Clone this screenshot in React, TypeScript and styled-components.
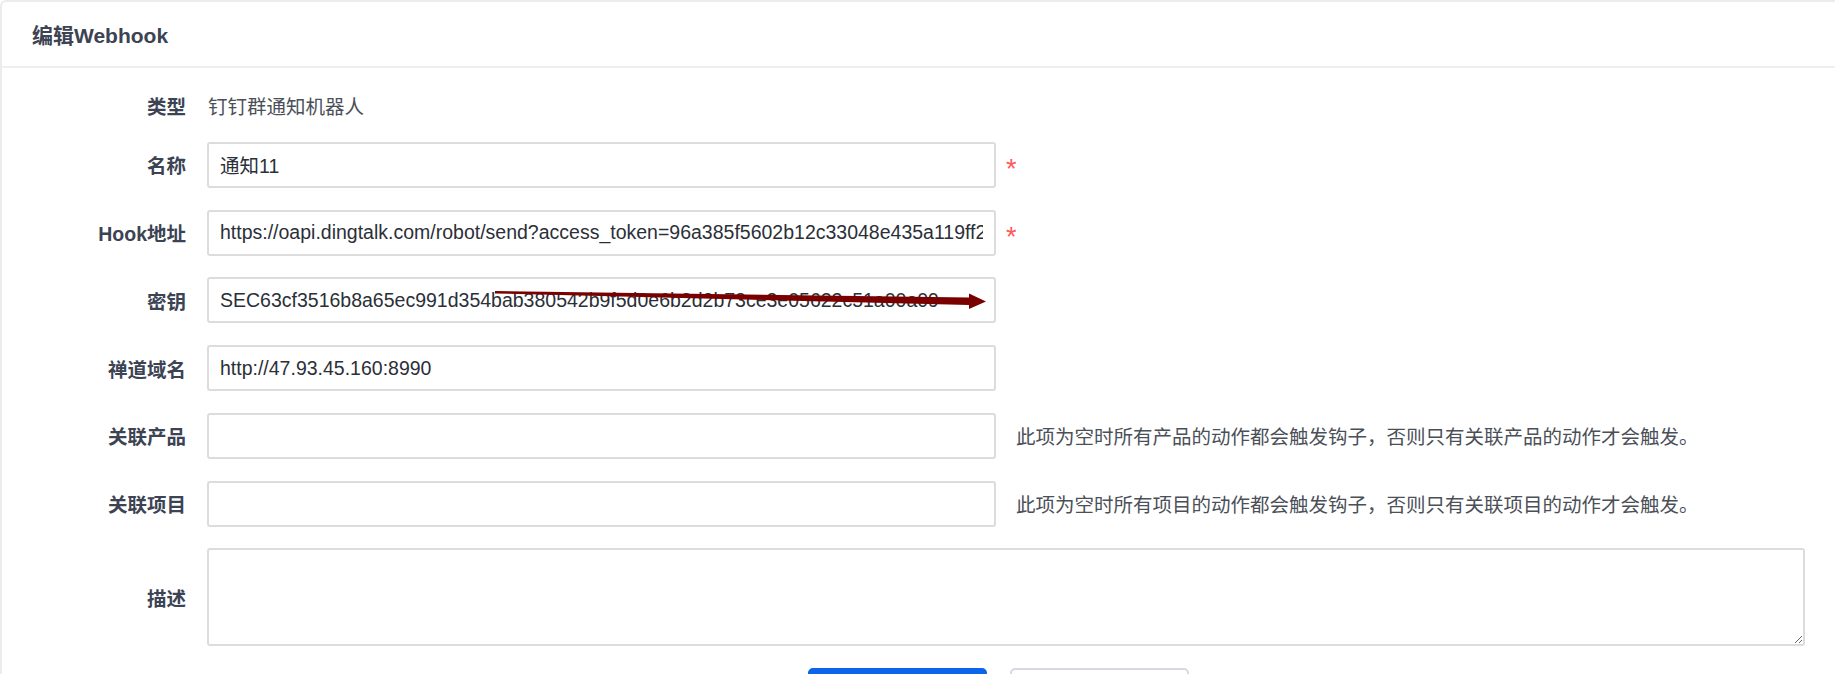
import styled, { createGlobalStyle } from 'styled-components';

const GlobalStyle = createGlobalStyle`
  html, body {
    margin: 0;
    padding: 0;
    background: #ffffff;
    overflow: hidden;
  }
  body {
    font-family: "Liberation Sans", "Noto Sans CJK SC", sans-serif;
    font-size: 19.5px;
    color: #3c4353;
  }
`;

const Panel = styled.div`
  width: 1900px;
  height: 720px;
  background: #fff;
  border: 2px solid #ececec;
  border-right: none;
  border-top-left-radius: 6px;
  box-sizing: border-box;
`;

const PanelHeader = styled.div`
  height: 64px;
  display: flex;
  align-items: center;
  padding-left: 30px;
  border-bottom: 2px solid #efefef;
`;

const Title = styled.h2`
  margin: 0;
  font-size: 21px;
  font-weight: bold;
  color: #3c4353;
`;

const Form = styled.div`
  width: 1803px;
  display: flex;
  flex-direction: column;
  gap: 21.75px;
  padding-top: 23px;
`;

const Row = styled.div<{ $tall?: boolean }>`
  display: flex;
  align-items: center;
  min-height: ${(p) => (p.$tall ? '98px' : '28px')};
`;

const Label = styled.div`
  width: 184px;
  flex: none;
  margin-right: 21px;
  text-align: right;
  font-weight: bold;
  color: #3c4353;
`;

const Value = styled.div`
  color: #4b4f58;
  padding-left: 1px;
`;

const Field = styled.div`
  position: relative;
  width: 789px;
  flex: none;
`;

const Input = styled.input`
  width: 100%;
  height: 46px;
  box-sizing: border-box;
  border: 2px solid #dcdcdc;
  border-radius: 3px;
  padding: 0 11px;
  font-family: "Liberation Sans", "Noto Sans CJK SC", sans-serif;
  font-size: 19.5px;
  color: #2b2f38;
  background: #fff;
  outline: none;
`;

const TextArea = styled.textarea`
  flex: 1;
  height: 98px;
  box-sizing: border-box;
  border: 2px solid #dcdcdc;
  border-radius: 3px;
  padding: 8px 11px;
  font-family: "Liberation Sans", "Noto Sans CJK SC", sans-serif;
  font-size: 19.5px;
  resize: vertical;
  outline: none;
`;

const Required = styled.span`
  margin-left: 10px;
  color: #ff5a5a;
  font-size: 27px;
  line-height: 1;
  padding-top: 9px;
`;

const Help = styled.span`
  margin-left: 20px;
  color: #4b4f58;
`;

const Arrow = styled.svg`
  position: absolute;
  left: 0;
  top: 0;
  pointer-events: none;
`;

const Actions = styled.div`
  display: flex;
  justify-content: center;
  gap: 23px;
  padding-left: 189px;
`;

const Button = styled.button<{ $primary?: boolean }>`
  width: 179px;
  height: 46px;
  border-radius: 5px;
  font-family: "Liberation Sans", "Noto Sans CJK SC", sans-serif;
  font-size: 19.5px;
  border: 2px solid ${(p) => (p.$primary ? '#0c64ea' : '#d6d9df')};
  background: ${(p) => (p.$primary ? '#0c64ea' : '#fff')};
  color: ${(p) => (p.$primary ? '#fff' : '#3c4353')};
`;

const fields = [
  { label: '名称', value: '通知11', required: true },
  {
    label: 'Hook地址',
    value:
      'https://oapi.dingtalk.com/robot/send?access_token=96a385f5602b12c33048e435a119ff2d7c0a3e8b4f',
    required: true,
  },
  {
    label: '密钥',
    value: 'SEC63cf3516b8a65ec991d354bab380542b9f5d0e6b2d2b73ce3e05622c51a00a09',
    arrow: true,
  },
  { label: '禅道域名', value: 'http://47.93.45.160:8990' },
  {
    label: '关联产品',
    value: '',
    help: '此项为空时所有产品的动作都会触发钩子，否则只有关联产品的动作才会触发。',
  },
  {
    label: '关联项目',
    value: '',
    help: '此项为空时所有项目的动作都会触发钩子，否则只有关联项目的动作才会触发。',
  },
];

function App() {
  return (
    <>
      <GlobalStyle />
      <Panel>
        <PanelHeader>
          <Title>编辑Webhook</Title>
        </PanelHeader>
        <Form>
          <Row>
            <Label>类型</Label>
            <Value>钉钉群通知机器人</Value>
          </Row>
          {fields.map((f) => (
            <Row key={f.label}>
              <Label>{f.label}</Label>
              <Field>
                <Input defaultValue={f.value} />
                {f.arrow && (
                  <Arrow width="789" height="46" viewBox="0 0 789 46">
                    <polygon
                      points="288,14 762,20.5 762,16.5 779,24.5 762,32 762,28 288,16.5"
                      fill="#7a0000"
                    />
                  </Arrow>
                )}
              </Field>
              {f.required && <Required>*</Required>}
              {f.help && <Help>{f.help}</Help>}
            </Row>
          ))}
          <Row $tall>
            <Label>描述</Label>
            <TextArea />
          </Row>
          <Actions>
            <Button $primary>保存</Button>
            <Button>返回</Button>
          </Actions>
        </Form>
      </Panel>
    </>
  );
}

export default App;
